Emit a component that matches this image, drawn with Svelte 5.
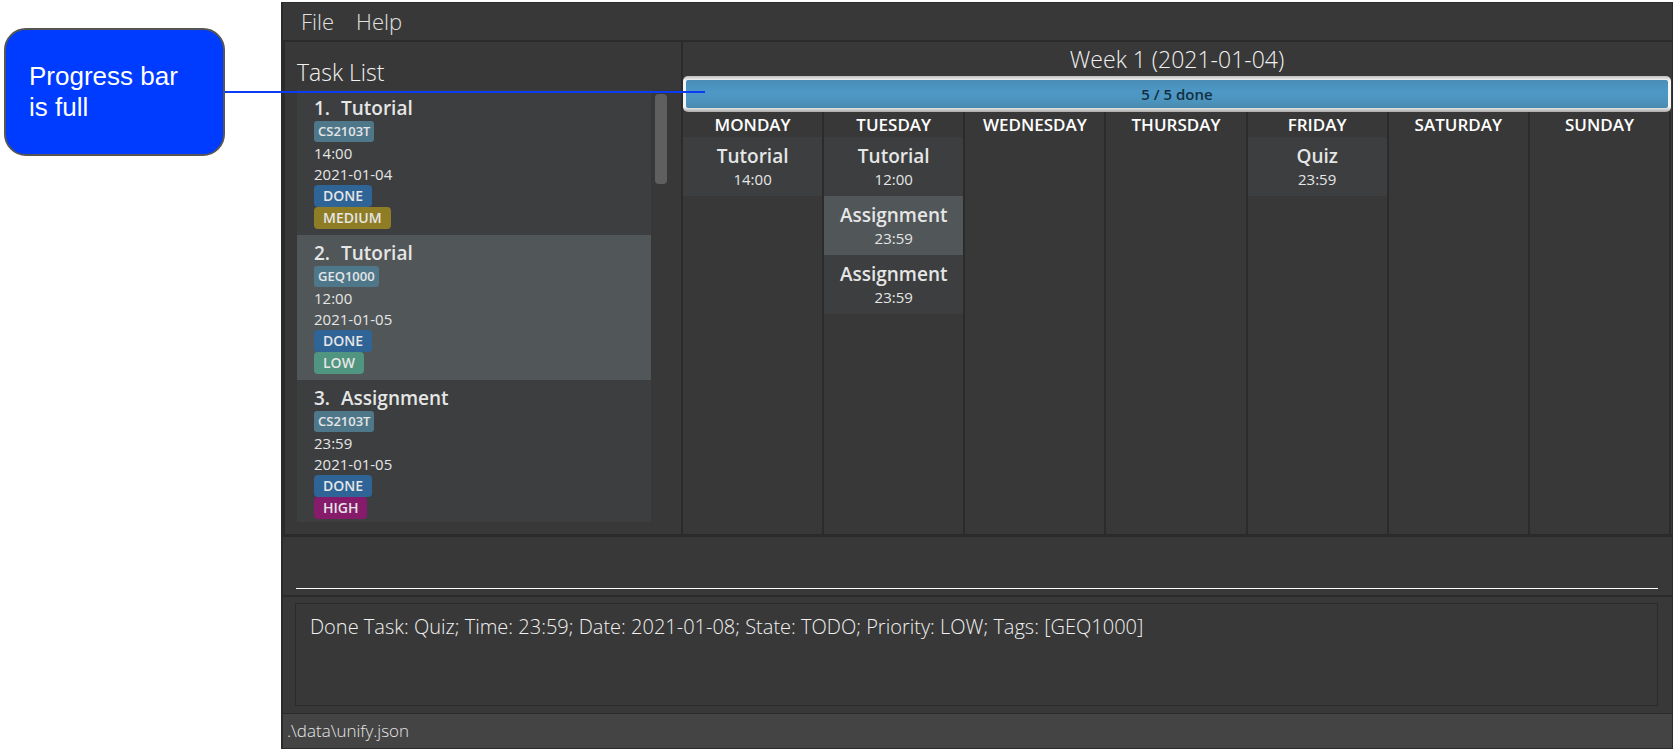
<script>
  const tasks = [
    { name: 'Tutorial', tag: 'CS2103T', time: '14:00', date: '2021-01-04', state: 'DONE', priority: 'MEDIUM' },
    { name: 'Tutorial', tag: 'GEQ1000', time: '12:00', date: '2021-01-05', state: 'DONE', priority: 'LOW' },
    { name: 'Assignment', tag: 'CS2103T', time: '23:59', date: '2021-01-05', state: 'DONE', priority: 'HIGH' }
  ];

  const days = [
    { name: 'MONDAY', items: [{ name: 'Tutorial', time: '14:00' }] },
    {
      name: 'TUESDAY',
      items: [
        { name: 'Tutorial', time: '12:00' },
        { name: 'Assignment', time: '23:59' },
        { name: 'Assignment', time: '23:59' }
      ]
    },
    { name: 'WEDNESDAY', items: [] },
    { name: 'THURSDAY', items: [] },
    { name: 'FRIDAY', items: [{ name: 'Quiz', time: '23:59' }] },
    { name: 'SATURDAY', items: [] },
    { name: 'SUNDAY', items: [] }
  ];

  const done = 5;
  const total = 5;
  let command = $state('');
  const result = 'Done Task: Quiz; Time: 23:59; Date: 2021-01-08; State: TODO; Priority: LOW; Tags: [GEQ1000]';
</script>

<div class="page">
  <aside class="callout">Progress bar is full</aside>

  <main class="window">
    <nav class="menu">
      <button type="button">File</button>
      <button type="button">Help</button>
    </nav>

    <div class="panels">
      <section class="tasks">
        <h2>Task List</h2>
        <div class="scroller">
          <ol class="list">
            {#each tasks as task, i}
              <li class="task">
                <h3><span class="number">{i + 1}.</span>{task.name}</h3>
                <span class="tag">{task.tag}</span>
                <span class="detail">{task.time}</span>
                <span class="detail">{task.date}</span>
                <span class="badge done">{task.state}</span>
                <span class="badge {task.priority.toLowerCase()}">{task.priority}</span>
              </li>
            {/each}
          </ol>
          <div class="track"><div class="thumb"></div></div>
        </div>
      </section>

      <section class="week">
        <h2>Week 1 (2021-01-04)</h2>
        <div class="progress" role="progressbar" aria-label="Tasks done" aria-valuemin="0" aria-valuemax={total} aria-valuenow={done}>
          <div class="bar" style="width: {(done / total) * 100}%"></div>
          <span class="count">{done} / {total} done</span>
        </div>
        <div class="days">
          {#each days as day}
            <section class="day">
              <h3>{day.name}</h3>
              <ul>
                {#each day.items as item}
                  <li><strong>{item.name}</strong><span>{item.time}</span></li>
                {/each}
              </ul>
            </section>
          {/each}
        </div>
      </section>
    </div>

    <div class="command">
      <input type="text" aria-label="Command" bind:value={command} />
    </div>
    <div class="result">
      <textarea readonly aria-label="Result" value={result}></textarea>
    </div>
    <footer>.\data\unify.json</footer>
  </main>

  <div class="pointer"></div>
</div>

<style>
  :global(body) {
    margin: 0;
    background: #fff;
  }

  .page,
  .page * {
    box-sizing: border-box;
  }

  .page {
    position: relative;
    display: flex;
    align-items: flex-start;
    height: 100vh;
    min-height: 640px;
    padding: 2px 2px 2px 4px;
    font-family: 'Open Sans', 'Noto Sans', sans-serif;
    color: #e6e6e6;
  }

  h2,
  h3,
  ol,
  ul {
    margin: 0;
    padding: 0;
    list-style: none;
  }

  .callout {
    flex: none;
    width: 221px;
    margin: 26px 56px 0 0;
    padding: 31px 40px 31px 23px;
    border: 2px solid #555;
    border-radius: 22px;
    background: #003cff;
    color: #fff;
    font: 26px/31px 'Liberation Sans', Arial, sans-serif;
  }

  .pointer {
    position: absolute;
    top: 91px;
    left: 225px;
    width: 480px;
    height: 2px;
    background: #0a3cf5;
  }

  .window {
    flex: 1;
    min-width: 0;
    align-self: stretch;
    display: flex;
    flex-direction: column;
    border: 1px solid #2b2b2b;
    border-left-width: 2px;
    background: #383838;
  }

  .menu {
    display: flex;
    padding: 0 8px;
    border-bottom: 2px solid #2b2b2b;
  }

  .menu button {
    padding: 0 10px;
    margin-right: 2px;
    border: 0;
    background: none;
    color: #e0e0e0;
    font: 350 22px/37px 'Open Sans', sans-serif;
  }

  .panels {
    flex: 1;
    min-height: 0;
    display: grid;
    grid-template-columns: 288fr 712fr;
    grid-template-rows: minmax(0, 1fr);
    border-bottom: 3px solid #2b2b2b;
  }

  h2 {
    color: #f2f2f2;
    font-size: 23px;
    font-weight: 350;
    line-height: 30px;
  }

  .tasks {
    display: flex;
    flex-direction: column;
    min-width: 0;
    padding: 15px 14px 12px 12px;
    border-left: 2px solid #2b2b2b;
    border-right: 2px solid #2b2b2b;
  }

  .tasks h2 {
    padding-bottom: 3px;
  }

  .scroller {
    flex: 1;
    min-height: 0;
    display: flex;
    gap: 4px;
  }

  .list {
    flex: 1;
    overflow: hidden;
  }

  .track {
    width: 12px;
    padding-top: 4px;
  }

  .thumb {
    height: 90px;
    border-radius: 4px;
    background: #5f5f5f;
  }

  .task {
    display: flex;
    flex-direction: column;
    align-items: flex-start;
    height: 145px;
    padding: 5px 17px 0;
    background: #3c3e3f;
  }

  .task:nth-child(even),
  .day li:nth-child(even) {
    background: #515658;
  }

  .task h3 {
    font-size: 19px;
    font-weight: 600;
    line-height: 26px;
  }

  .number {
    display: inline-block;
    width: 27px;
  }

  .tag {
    margin-bottom: 1px;
    padding: 0 4px;
    border-radius: 3px;
    background: #4f778a;
    font-size: 13px;
    font-weight: 600;
    line-height: 21px;
  }

  .detail {
    font-size: 15px;
    line-height: 21px;
  }

  .badge {
    padding: 0 9px;
    border-radius: 4px;
    font-size: 14px;
    font-weight: 600;
    line-height: 22px;
  }

  .done {
    background: #2f6496;
  }

  .medium {
    background: #8f7d26;
  }

  .low {
    background: #50957f;
  }

  .high {
    background: #851b6a;
  }

  .week {
    display: flex;
    flex-direction: column;
    min-width: 0;
    padding-right: 1px;
  }

  .week h2 {
    padding-top: 2px;
    text-align: center;
  }

  .progress {
    display: grid;
    align-items: center;
    height: 36px;
    margin-top: 2px;
    padding: 3px;
    border-radius: 5px;
    background: linear-gradient(#bdbdbd, #f4f4f4 12%, #f4f4f4 86%, #a8a8a8);
  }

  .bar,
  .count {
    grid-area: 1 / 1;
  }

  .bar {
    height: 28px;
    border-radius: 2px;
    background: linear-gradient(#488db6, #4e98c7 40%, #4e96c1 65%, #488bb0);
  }

  .count {
    color: #12303f;
    font-size: 15px;
    font-weight: 600;
    text-align: center;
  }

  .days {
    flex: 1;
    display: grid;
    grid-template-columns: repeat(7, 1fr);
  }

  .day {
    border-right: 2px solid #2b2b2b;
  }

  .day h3 {
    color: #fff;
    font-size: 17px;
    font-weight: 600;
    line-height: 25px;
    text-align: center;
  }

  .day li {
    display: flex;
    flex-direction: column;
    align-items: center;
    height: 59px;
    padding-top: 6px;
    background: #3c3e3f;
  }

  .day strong {
    font-size: 19px;
    font-weight: 600;
    line-height: 26px;
  }

  .day span {
    font-size: 15px;
    line-height: 21px;
  }

  .command {
    padding: 10px 14px 6px 13px;
    border-bottom: 2px solid #2b2b2b;
  }

  .command input {
    display: block;
    width: 100%;
    height: 42px;
    padding: 0 4px;
    border: 0;
    border-bottom: 1px solid #fff;
    outline: 0;
    background: none;
    color: #fff;
    font: 300 20px 'Open Sans', sans-serif;
  }

  .result {
    padding: 6px 14px 7px 12px;
  }

  .result textarea {
    display: block;
    width: 100%;
    height: 103px;
    padding: 10px 14px;
    border: 1px solid #2b2b2b;
    outline: 0;
    resize: none;
    background: none;
    color: #f0f0f0;
    font: 350 20px/26px 'Open Sans', sans-serif;
  }

  footer {
    padding: 0 4px;
    border-top: 1px solid #2b2b2b;
    background: #444;
    font-size: 17px;
    font-weight: 350;
    line-height: 34px;
  }
</style>
